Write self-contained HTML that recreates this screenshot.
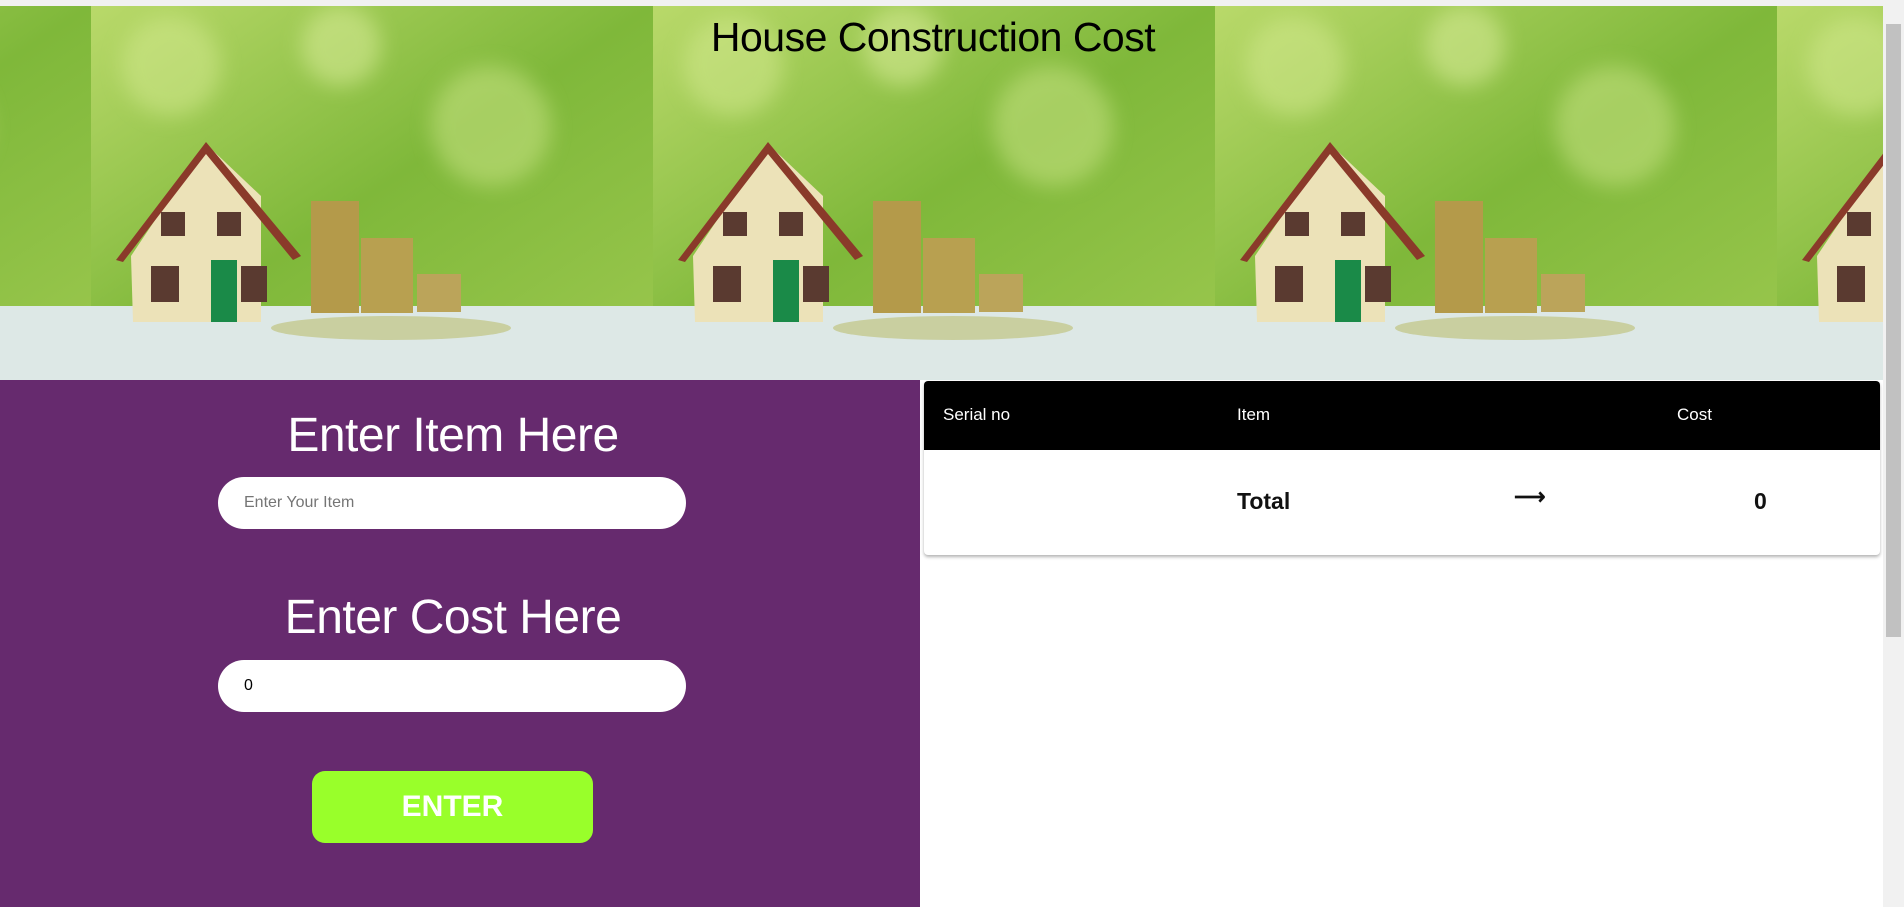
<!DOCTYPE html>
<html><head><meta charset="utf-8"><style>
*{margin:0;padding:0;box-sizing:border-box}
body{width:1904px;height:907px;overflow:hidden;font-family:"Liberation Sans",sans-serif;background:#fff;position:relative}
.topbar{position:absolute;left:0;top:0;width:1904px;height:6px;background:#f1f1f1}
.hdr{position:absolute;left:0;top:6px;width:1883px;height:374px;overflow:hidden}
.title{position:absolute;left:0;width:1866px;top:8px;text-align:center;font-size:41px;color:#000;letter-spacing:-0.5px}
.left{position:absolute;left:0;top:380px;width:920px;height:527px;background:#662a6e}
.lbl{position:absolute;left:0;width:906px;text-align:center;color:#fff;font-size:48px;letter-spacing:-0.5px}
.inp{position:absolute;left:218px;width:468px;height:52px;background:#fff;border-radius:26px;font-size:16px;padding-left:26px;line-height:52px}
.btn{position:absolute;left:312px;top:771px;width:281px;height:72px;background:#99ff2a;border-radius:13px;color:#fff;font-weight:bold;font-size:30px;text-align:center;line-height:72px}
.tbl{position:absolute;left:924px;top:381px;width:956px;height:174px;background:#fff;border-radius:4px;box-shadow:0 2px 3px rgba(0,0,0,.3);overflow:hidden}
.th{position:absolute;left:0;top:0;width:956px;height:69px;background:#000;color:#fff;font-size:17px}
.th span,.tr span{position:absolute}
.tr{position:absolute;top:69px;left:0;width:956px;height:105px;font-size:23px;font-weight:bold;color:#111}
.sb{position:absolute;left:1883px;top:6px;width:21px;height:901px;background:#f1f1f1}
.thumb{position:absolute;left:1886px;top:24px;width:15px;height:613px;background:#c1c1c1}
</style></head><body>
<div class="topbar"></div>
<div class="hdr">
<svg width="1883" height="374" viewBox="0 0 1883 374">
<defs>
<linearGradient id="bg" x1="0" y1="0" x2="1" y2="1"><stop offset="0" stop-color="#b9d96a"/><stop offset=".5" stop-color="#7fb83a"/><stop offset="1" stop-color="#9cc84f"/></linearGradient>
<filter id="bl"><feGaussianBlur stdDeviation="10"/></filter>
<g id="tile">
<rect width="562" height="374" fill="url(#bg)"/>
<g filter="url(#bl)" opacity=".5">
<circle cx="80" cy="60" r="50" fill="#d6ea92"/>
<circle cx="400" cy="120" r="60" fill="#cfe68a"/>
<circle cx="250" cy="40" r="40" fill="#e0f0a0"/>
</g>
<rect y="300" width="562" height="74" fill="#dde8e6"/>
<polygon points="40,250 115,138 170,190 170,316 42,316" fill="#ece2b8"/>
<polygon points="25,254 115,136 210,250 202,254 115,148 32,256" fill="#8a3a2a"/>
<rect x="70" y="206" width="24" height="24" fill="#5a3a30"/><rect x="126" y="206" width="24" height="24" fill="#5a3a30"/>
<rect x="60" y="260" width="28" height="36" fill="#5a3a30"/><rect x="150" y="260" width="26" height="36" fill="#5a3a30"/>
<rect x="120" y="254" width="26" height="62" fill="#1a8a48"/>
<rect x="220" y="195" width="48" height="112" fill="#b49a4a"/><rect x="270" y="232" width="52" height="75" fill="#b8a050"/><rect x="326" y="268" width="44" height="38" fill="#bba45a"/>
<ellipse cx="300" cy="322" rx="120" ry="12" fill="#c9cfa0"/>
</g>
</defs>
<use href="#tile" x="-471"/><use href="#tile" x="91"/><use href="#tile" x="653"/><use href="#tile" x="1215"/><use href="#tile" x="1777"/>
</svg>
<div class="title">House Construction Cost</div>
</div>
<div class="left"></div>
<div class="lbl" style="top:408px">Enter Item Here</div>
<div class="inp" style="top:477px;color:#757575">Enter Your Item</div>
<div class="lbl" style="top:590px">Enter Cost Here</div>
<div class="inp" style="top:660px;color:#000">0</div>
<div class="btn">ENTER</div>
<div class="tbl">
<div class="th"><span style="left:19px;top:24px">Serial no</span><span style="left:313px;top:24px">Item</span><span style="left:753px;top:24px">Cost</span></div>
<div class="tr"><span style="left:313px;top:38px">Total</span><span style="left:590px;top:34px;font-size:22px">&#10230;</span><span style="left:830px;top:38px">0</span></div>
</div>
<div class="sb"></div><div class="thumb"></div>
</body></html>
